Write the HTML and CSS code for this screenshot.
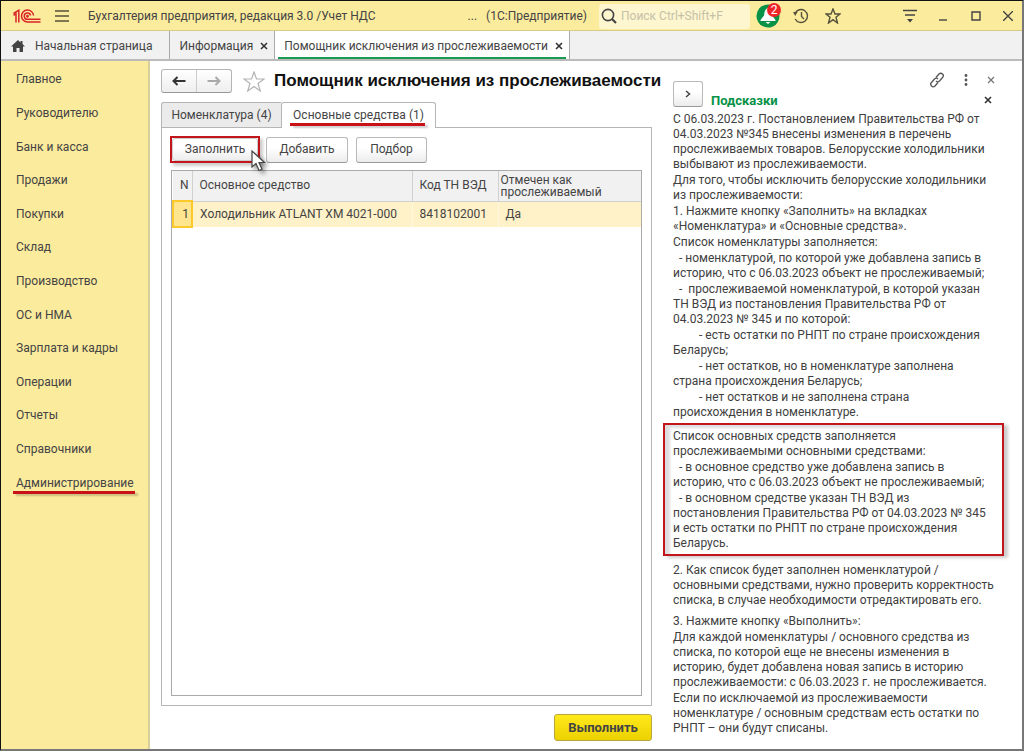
FILE: index.html
```html
<!DOCTYPE html>
<html lang="ru">
<head>
<meta charset="utf-8">
<title>Бухгалтерия предприятия</title>
<link rel="stylesheet" href="styles.css">
</head>
<body>
<div class="window">
  <header class="titlebar">
    <svg class="logo" width="28" height="15" viewBox="0 0 28 15" fill="none" stroke="#d9252a" stroke-width="1.500"><path d="M0.500 4.500 5.800 1.200V13.500M0.500 6.300 3 4.800V13.500"/><path d="M20.500 6.500A6 6 0 1 0 14.500 13h13M17.600 6.500A3.200 3.200 0 1 0 14.500 10.300h13"/><circle cx="14.500" cy="7.200" r="0.700"/></svg>
    <button class="icon-btn menu-btn" aria-label="Меню"><svg width="14" height="14" viewBox="0 0 14 14" stroke="#55523c" stroke-width="1.500"><path d="M0 2h14M0 7h14M0 12h14"/></svg></button>
    <span class="app-title">Бухгалтерия предприятия, редакция 3.0 /Учет НДС</span>
    <span class="dots">...</span>
    <span class="platform">(1С:Предприятие)</span>
    <label class="search">
      <svg width="16" height="16" viewBox="0 0 16 16" fill="none" stroke="#444" stroke-width="1.600"><circle cx="7" cy="7" r="5.600"/><path d="m11 11 4 4" stroke-width="2.200"/></svg>
      <input type="text" placeholder="Поиск Ctrl+Shift+F" aria-label="Поиск">
    </label>
    <button class="icon-btn bell" aria-label="Уведомления">
      <svg width="24" height="24" viewBox="0 0 24 24"><circle cx="12" cy="12" r="11.500" fill="#079247"/><path d="M12 4c-3 1-3.500 4-4 7.500L4.500 16v1h15v-1L16 11.500C15.500 8 15 5 12 4z" fill="#fff"/><path d="M9.500 18h5l-2.500 2z" fill="#fff"/></svg>
      <span class="badge">2</span>
    </button>
    <button class="icon-btn history" aria-label="История"><svg width="16" height="16" viewBox="0 0 16 16" fill="none" stroke="#55523c" stroke-width="1.400"><path d="M2 5.500A6.500 6.500 0 1 1 2.200 11M8.500 4v4.500l2.500 2.500"/><path d="M0 4h4.500L2.200 8z" fill="#55523c" stroke="none"/></svg></button>
    <button class="icon-btn fav" aria-label="Избранное"><svg width="16" height="16" viewBox="0 0 16 16" fill="none" stroke="#55523c" stroke-width="1.400"><path d="m8 1 2 5h5l-4 3.300L12.500 15 8 11.700 3.500 15 5 9.300 1 6h5z"/></svg></button>
    <button class="icon-btn settings" aria-label="Настройки"><svg width="14" height="14" viewBox="0 0 14 14" stroke="#444" stroke-width="1.400"><path d="M0 1.500h14M2 6h10"/><path d="M4 10h6l-3 3.500z" fill="#444" stroke="none"/></svg></button>
    <button class="icon-btn minimize" aria-label="Свернуть"><svg width="10" height="14" viewBox="0 0 10 14" stroke="#444" stroke-width="1.400"><path d="M1 11h8"/></svg></button>
    <button class="icon-btn maximize" aria-label="Развернуть"><svg width="10" height="10" viewBox="0 0 10 10" fill="none" stroke="#444" stroke-width="1.400"><path d="M1 1h8v8H1z"/></svg></button>
    <button class="icon-btn close-win" aria-label="Закрыть"><svg width="10" height="10" viewBox="0 0 10 10" stroke="#444" stroke-width="1.400"><path d="m0 0 10 10M10 0 0 10"/></svg></button>
  </header>

  <nav class="tabs" aria-label="Открытые окна">
    <button class="tab tab-home"><svg width="14" height="13" viewBox="0 0 14 13" fill="#444"><path d="M7 0 0 6.500h2V12h3.500V8h3v4H12V6.500h2L11.500 4V1h-2v1.500z"/></svg>Начальная страница</button>
    <button class="tab">Информация<svg class="x" width="8" height="8" viewBox="0 0 8 8"><path d="m1 1 6 6M7 1 1 7"/></svg></button>
    <button class="tab active">Помощник исключения из прослеживаемости<svg class="x" width="8" height="8" viewBox="0 0 8 8"><path d="m1 1 6 6M7 1 1 7"/></svg></button>
  </nav>

  <div class="workspace">
    <nav class="sidebar" aria-label="Разделы">
      <a href="#">Главное</a>
      <a href="#">Руководителю</a>
      <a href="#">Банк и касса</a>
      <a href="#">Продажи</a>
      <a href="#">Покупки</a>
      <a href="#">Склад</a>
      <a href="#">Производство</a>
      <a href="#">ОС и НМА</a>
      <a href="#">Зарплата и кадры</a>
      <a href="#">Операции</a>
      <a href="#">Отчеты</a>
      <a href="#">Справочники</a>
      <a href="#"><span class="marked">Администрирование</span></a>
    </nav>

    <main class="form">
      <div class="form-head">
        <div class="nav-pair">
          <button aria-label="Назад"><svg width="14" height="10" viewBox="0 0 14 10" stroke="#333" stroke-width="2" fill="none"><path d="M13.500 5H2M5.500 1 1.500 5l4 4"/></svg></button>
          <button aria-label="Вперед"><svg width="14" height="10" viewBox="0 0 14 10" stroke="#aaa" stroke-width="2" fill="none"><path d="M.5 5H12M8.500 1l4 4-4 4"/></svg></button>
        </div>
        <svg class="star" width="22" height="21" viewBox="0 0 22 21" fill="none" stroke="#b4b4b4" stroke-width="1.200"><path d="m11 1 2.500 7H21l-6 4.500L17.300 20 11 15.500 4.700 20 7 12.500 1 8h7.500z"/></svg>
        <h1>Помощник исключения из прослеживаемости</h1>
      </div>

      <div class="page-tabs">
        <button class="page-tab">Номенклатура (4)</button>
        <button class="page-tab current"><span class="marked">Основные средства (1)</span></button>
      </div>

      <section class="page">
        <div class="toolbar">
          <div class="highlight"><button class="btn btn-fill">Заполнить</button>
            <svg class="cursor" width="18" height="24" viewBox="0 0 18 24"><path d="M2 1v16l4-3.500 3 7 3-1.300-3-6.700h5.500z" fill="#fff" stroke="#444" stroke-width="1.200"/></svg>
          </div>
          <button class="btn btn-add">Добавить</button>
          <button class="btn btn-pick">Подбор</button>
        </div>
        <div class="grid-frame">
          <table class="assets">
            <colgroup><col class="c-num"><col class="c-name"><col class="c-code"><col class="c-flag"></colgroup>
            <thead><tr><th>N</th><th>Основное средство</th><th>Код ТН ВЭД</th><th class="two-line">Отмечен как<br>прослеживаемый</th></tr></thead>
            <tbody><tr><td class="num">1</td><td>Холодильник ATLANT XM 4021-000</td><td>8418102001</td><td>Да</td></tr></tbody>
          </table>
        </div>
      </section>

      <div class="form-foot"><button class="btn-run">Выполнить</button></div>
    </main>

    <aside class="hints">
      <div class="hints-head">
        <button class="btn collapse" aria-label="Свернуть подсказки"><svg width="6" height="8" viewBox="0 0 6 8" fill="none" stroke="#444" stroke-width="1.500"><path d="m1 1 3.500 3L1 7"/></svg></button>
        <h2>Подсказки</h2>
        <div class="hints-tools">
          <div class="tools-row">
            <button class="icon-btn" aria-label="Ссылка"><svg width="16" height="16" viewBox="0 0 16 16" fill="none" stroke="#555" stroke-width="1.300"><path d="m7 5.500 3-3.500c1-1 2.500-1 3.500 0s1 2.500 0 3.500l-3 3.500c-1 1-2.500 1-3.500 0"/><path d="m9 10.500-3 3.500c-1 1-2.500 1-3.500 0s-1-2.500 0-3.500l3-3.500c1-1 2.500-1 3.500 0"/></svg></button>
            <button class="icon-btn" aria-label="Еще"><svg width="4" height="12" viewBox="0 0 4 12" fill="#555"><circle cx="2" cy="1.500" r="1.400"/><circle cx="2" cy="6" r="1.400"/><circle cx="2" cy="10.500" r="1.400"/></svg></button>
            <button class="icon-btn" aria-label="Закрыть форму"><svg class="x thin" width="8" height="8" viewBox="0 0 8 8"><path d="m1 1 6 6M7 1 1 7"/></svg></button>
          </div>
          <button class="icon-btn" aria-label="Закрыть подсказки"><svg class="x" width="8" height="8" viewBox="0 0 8 8"><path d="m1 1 6 6M7 1 1 7"/></svg></button>
        </div>
      </div>
      <div class="hint-block">
        <p>С 06.03.2023 г. Постановлением Правительства РФ от<br>04.03.2023 №345 внесены изменения в перечень<br>прослеживаемых товаров. Белорусские холодильники<br>выбывают из прослеживаемости.</p>
        <p>Для того, чтобы исключить белорусские холодильники<br>из прослеживаемости:</p>
        <p>1. Нажмите кнопку «Заполнить» на вкладках<br>«Номенклатура» и «Основные средства».</p>
        <p>Список номенклатуры заполняется:</p>
        <p>&nbsp; - номенклатурой, по которой уже добавлена запись в<br>историю, что с 06.03.2023 объект не прослеживаемый;</p>
        <p>&nbsp; -&nbsp; прослеживаемой номенклатурой, в которой указан<br>ТН ВЭД из постановления Правительства РФ от<br>04.03.2023 № 345 и по которой:</p>
        <p class="deep">- есть остатки по РНПТ по стране происхождения<br>Беларусь;</p>
        <p class="deep">- нет остатков, но в номенклатуре заполнена<br>страна происхождения Беларусь;</p>
        <p class="deep">- нет остатков и не заполнена страна<br>происхождения в номенклатуре.</p>
      </div>
      <div class="hint-block framed">
        <p>Список основных средств заполняется<br>прослеживаемыми основными средствами:</p>
        <p>&nbsp; - в основное средство уже добавлена запись в<br>историю, что с 06.03.2023 объект не прослеживаемый;</p>
        <p>&nbsp; - в основном средстве указан ТН ВЭД из<br>постановления Правительства РФ от 04.03.2023 № 345<br>и есть остатки по РНПТ по стране происхождения<br>Беларусь.</p>
      </div>
      <div class="hint-block step-two">
        <p>2. Как список будет заполнен номенклатурой /<br>основными средствами, нужно проверить корректность<br>списка, в случае необходимости отредактировать его.</p>
      </div>
      <div class="hint-block">
        <p>3. Нажмите кнопку «Выполнить»:</p>
        <p>Для каждой номенклатуры / основного средства из<br>списка, по которой еще не внесены изменения в<br>историю, будет добавлена новая запись в историю<br>прослеживаемости: с 06.03.2023 г. не прослеживается.</p>
        <p>Если по исключаемой из прослеживаемости<br>номенклатуре / основным средствам есть остатки по<br>РНПТ – они будут списаны.</p>
      </div>
    </aside>
  </div>
</div>
</body>
</html>
```
FILE: styles.css
```css
* { box-sizing: border-box; }
body {
  margin: 0;
  font: 12px/15px Roboto, "Liberation Sans", Arial, sans-serif;
  color: #444;
  background: #fff;
}
button, input { font: inherit; color: inherit; }
button { padding: 0; margin: 0; border: 0; background: none; }
svg { display: block; flex: none; }
.window {
  display: flex;
  flex-direction: column;
  min-height: 100vh;
  border: 1px solid #111;
  border-right: 2px solid #777;
  border-bottom: 2px solid #777;
}
.x { stroke: #333; stroke-width: 1.6; }
.x.thin { stroke: #777; stroke-width: 1.3; }
.icon-btn { display: flex; align-items: center; justify-content: center; flex: none; }

.titlebar {
  display: flex;
  align-items: center;
  height: 30px;
  padding: 1px 9px 0 12px;
  background: #fbeb9d;
  border-bottom: 1px solid #d8cb86;
}
.menu-btn { margin-left: 14px; }
.app-title { margin-left: 19px; white-space: nowrap; }
.dots { margin-left: auto; }
.platform { margin: 0 12px 0 9px; white-space: nowrap; }
.search {
  display: flex;
  align-items: center;
  gap: 4px;
  width: 151px;
  height: 25px;
  padding: 0 2px;
  background: #fef6cf;
  border-radius: 3px;
}
.search input { width: 100%; min-width: 0; padding: 0; border: 0; outline: 0; background: none; }
.search input::placeholder { color: #c5c0a8; opacity: 1; }
.bell { position: relative; margin-left: 6px; }
.badge {
  position: absolute;
  top: -1px;
  right: -1px;
  width: 14px;
  height: 14px;
  border-radius: 7px;
  background: #ee2429;
  color: #fff;
  line-height: 14px;
}
.history { margin-left: 13px; }
.fav { margin-left: 16px; }
.settings { margin-left: 62px; }
.minimize { margin-left: 21px; }
.maximize { margin-left: 23px; }
.close-win { margin-left: 22px; }

.tabs { display: flex; height: 30px; background: #f1f1f1; border-bottom: 2px solid #bbb; }
.tab {
  display: flex;
  align-items: center;
  gap: 7px;
  padding: 2px 6px 0 9px;
  border-right: 1px solid #aaa;
  white-space: nowrap;
}
.tab-home { gap: 10px; padding: 2px 17px 0 10px; }
.tab.active { background: linear-gradient(#1a9c50, #1a9c50) center 26px / calc(100% - 6px) 2px no-repeat #fff; }

.workspace { display: flex; flex: 1; }
.sidebar {
  display: grid;
  grid-auto-rows: 1fr;
  align-items: center;
  align-self: stretch;
  flex: none;
  width: 149px;
  padding: 2px 0 249px 15px;
  background: #fbeb9d;
  border-right: 2px solid #d9cf9c;
}
.sidebar a { color: #444; text-decoration: none; white-space: nowrap; }
.marked { position: relative; }
.marked::after {
  content: "";
  position: absolute;
  left: -3px;
  right: -1px;
  bottom: -4px;
  height: 3px;
  background: #c81218;
  box-shadow: 3px 2px 2px #0003;
}

.form { display: flex; flex-direction: column; flex: 1; min-width: 0; padding: 8px 10px 8px 11px; }
.form-head { display: flex; align-items: center; height: 24px; }
.nav-pair {
  display: flex;
  flex: none;
  width: 71px;
  height: 24px;
  border: 1px solid #b5b5b5;
  border-bottom-color: #999;
  border-radius: 3px;
  background: linear-gradient(#fff, #eee);
}
.nav-pair button { display: flex; flex: 1; align-items: center; justify-content: center; }
.nav-pair button + button { border-left: 1px solid #ccc; }
.star { margin: 0 9px 0 11px; }
h1 { margin: 0; font: bold 17px/22px "Liberation Sans", Arial, sans-serif; color: #111; white-space: nowrap; }
.page-tabs { display: flex; height: 26px; margin-top: 9px; position: relative; z-index: 1; }
.page-tab {
  width: 120px;
  border: 1px solid #b5b5b5;
  border-right: 0;
  border-radius: 3px 0 0 0;
  background: #ebebeb;
  white-space: nowrap;
}
.page-tab.current { width: 155px; border-right: 1px solid #b5b5b5; border-bottom: 0; border-radius: 3px 3px 0 0; background: #fff; }
.page { display: flex; flex-direction: column; flex: 1; margin-top: -1px; padding: 8px 9px 9px; border: 1px solid #b5b5b5; }
.toolbar { display: flex; align-items: center; height: 27px; }
.btn {
  height: 26px;
  border: 1px solid #b9b9b9;
  border-bottom-color: #999;
  border-radius: 3px;
  background: linear-gradient(#fff 40%, #ececec);
}
.highlight { position: relative; display: flex; width: 90px; height: 27px; margin-left: -1px; border: 2px solid #c2161c; box-shadow: 3px 3px 3px #0003; }
.btn-fill { width: 100%; height: 100%; border-color: #ccc; }
.cursor { position: absolute; left: 78px; top: 12px; filter: drop-shadow(3px 3px 2px #0006); }
.btn-add { width: 82px; margin-left: 6px; }
.btn-pick { width: 71px; margin-left: 8px; }
.grid-frame { flex: 1; margin-top: 7px; border: 1px solid #aaa; }
.assets { width: 100%; table-layout: fixed; border-collapse: collapse; }
.c-num { width: 19px; }
.c-name { width: 220px; }
.c-code { width: 86px; }
.assets th {
  height: 30px;
  padding: 0 0 0 7px;
  border-right: 1px solid #d0d0d0;
  border-bottom: 1px solid #d0d0d0;
  background: #f1f1f1;
  font-weight: normal;
  text-align: left;
  white-space: nowrap;
}
.assets th:last-child, .assets td:last-child { border-right: 0; }
.assets .two-line { padding-left: 2px; line-height: 12px; }
.assets td { height: 26px; padding: 0 0 0 7px; border-right: 1px solid #fff8e0; background: #fff1c8; white-space: nowrap; }
.assets td.num { padding: 0 2px 0 0; border: 2px solid #fcc92a; background: #ffe58e; text-align: right; }
.form-foot { display: flex; justify-content: flex-end; margin-top: 8px; }
.btn-run {
  width: 98px;
  height: 27px;
  border: 1px solid #b9a640;
  border-radius: 3px;
  background: linear-gradient(#ffe91c, #ecd100);
  font-size: 13px;
  font-weight: bold;
}

.hints { flex: none; width: 360px; padding: 11px 18px 8px 1px; color: #404040; }
.hints-head { display: flex; height: 40px; padding-left: 10px; }
.collapse { display: flex; align-items: center; justify-content: center; width: 30px; height: 26px; margin-top: 9px; }
h2 { margin: 21px 0 0 8px; font-size: 13px; line-height: 15px; color: #079247; }
.hints-tools { display: flex; flex-direction: column; align-items: flex-end; gap: 8px; margin-left: auto; padding-right: 9px; }
.hints-tools > .icon-btn { padding-right: 3px; }
.tools-row { display: flex; align-items: center; height: 16px; gap: 19px; }
.hint-block { padding-left: 10px; white-space: nowrap; }
.hint-block p { margin: 0 0 1px; }
.hint-block .deep { text-indent: 26px; }
.framed { margin: 3px 0 7px; padding: 4px 0 2px 8px; border: 2px solid #c2161c; box-shadow: 4px 2px 3px #0003, inset 5px 3px 3px #0002; }
.step-two { margin-bottom: 6px; }
```
